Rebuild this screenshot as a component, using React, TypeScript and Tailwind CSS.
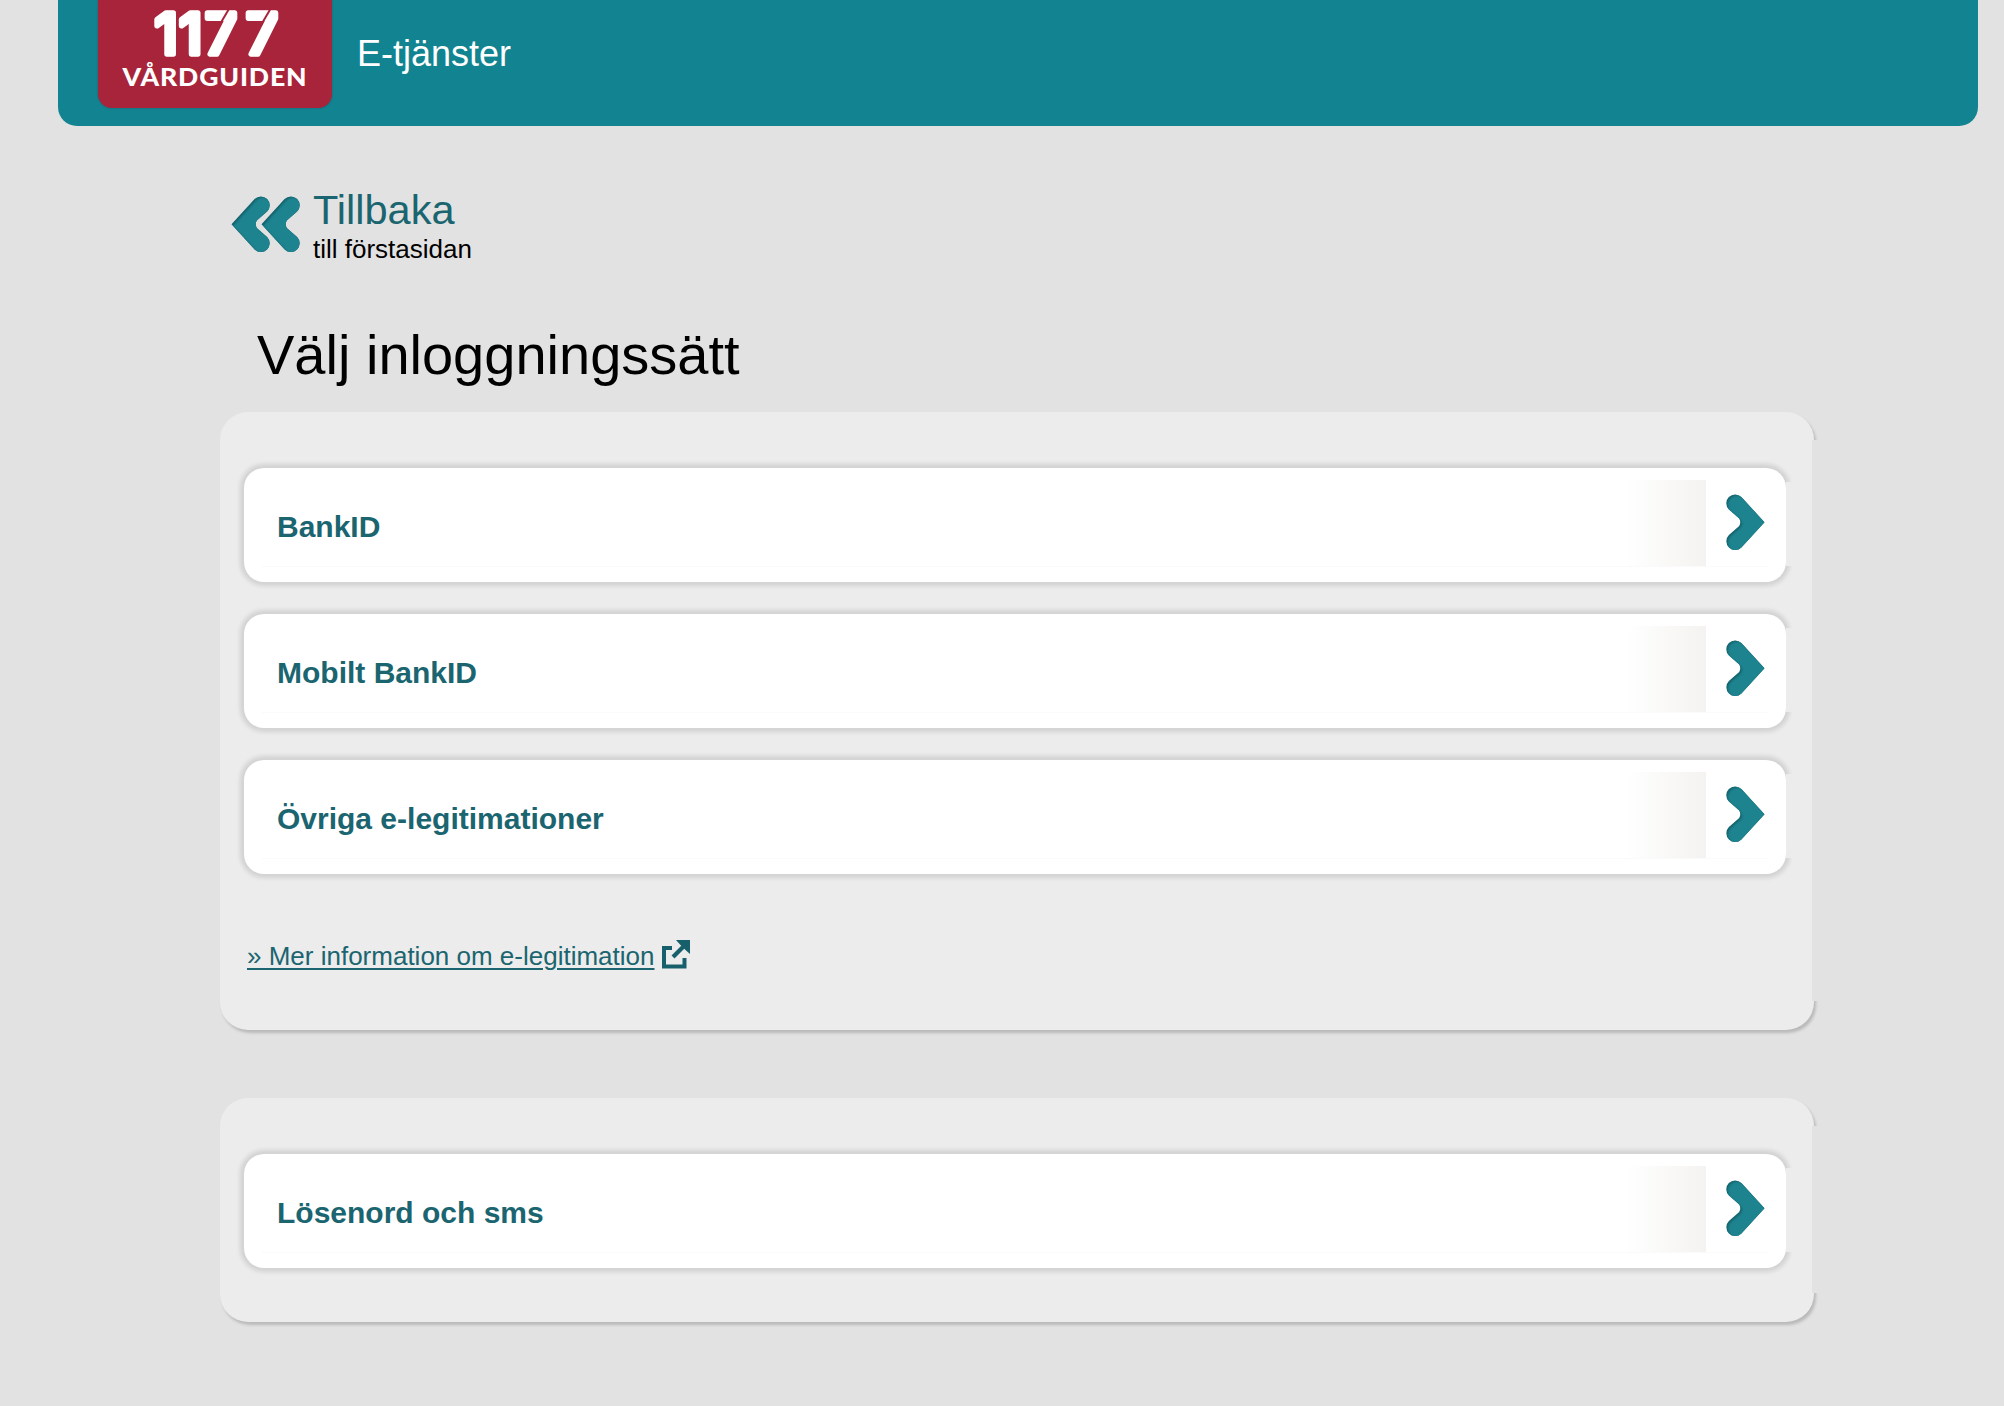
import React, { useId } from "react";

const CHEVRON =
  "M17.4 7 L40.5 32.3 L17.4 57.4 A8.8 8.8 0 0 1 4.9 45 L15.2 36 Q17.4 32.3 15.2 28.6 L4.9 19.6 A8.8 8.8 0 0 1 17.4 7 Z";
const CHEVRON_LEFT =
  "M26.6 7 L3.5 32.3 L26.6 57.4 A8.8 8.8 0 0 0 39.1 45 L28.8 36 Q26.6 32.3 28.8 28.6 L39.1 19.6 A8.8 8.8 0 0 0 26.6 7 Z";

function Chevron({ left = false, className = "" }: { left?: boolean; className?: string }) {
  const id = useId();
  const d = left ? CHEVRON_LEFT : CHEVRON;
  return (
    <svg viewBox="0 0 44 64" className={`h-16 w-11 shrink-0 ${className}`} aria-hidden="true">
      <clipPath id={id}>
        <path d={d} />
      </clipPath>
      <path d={d} fill="#13606a" />
      <g clipPath={`url(#${id})`}>
        <path
          d={d}
          fill="#1d838f"
          stroke="#1d838f"
          strokeWidth="1.5"
          transform="translate(2.2 1.6)"
          className="blur-[1px]"
        />
      </g>
    </svg>
  );
}

function Logo() {
  return (
    <a className="ml-10 block h-[107.5px] w-[234px] rounded-b-[14px] bg-[#a8243a] shadow-[0_0_2px_rgba(60,30,60,0.4)]">
      <svg viewBox="0 0 234 108" className="h-[108px] w-[234px] overflow-visible" role="img" aria-label="1177 Vårdguiden">
        <text
          x="56.5 81 107 148"
          y="54.3"
          fill="#fff"
          stroke="#fff"
          strokeWidth="5.5"
          strokeLinejoin="round"
          fontFamily="Inter, sans-serif"
          fontWeight="500"
          fontSize="56"
        >
          1177
        </text>
        <g stroke="#a8243a" strokeWidth="2">
          <path d="M131.500 8 L121.500 25" />
          <path d="M173 8 L163 25" />
        </g>
        <text
          x="24.500"
          y="85.500"
          fill="#fff"
          fontFamily="Lato, sans-serif"
          fontWeight="900"
          fontSize="25"
          letterSpacing="0.8"
          textLength="185"
          lengthAdjust="spacingAndGlyphs"
        >
          VÅRDGUIDEN
        </text>
      </svg>
    </a>
  );
}

function Choice({ label }: { label: string }) {
  return (
    <a className="relative flex h-[113.500px] items-start rounded-[20px] bg-white shadow-[0_0_4px_4px_rgba(0,0,0,0.11)]">
      <span className="ml-[33px] mt-[41px] text-[30px] font-bold leading-[36px] text-[#1b6570]">{label}</span>
      <span className="ml-auto mt-3 h-[86px] w-20 bg-linear-to-r from-white to-[#f4f3f1]" />
      <Chevron className="ml-[18px] mr-[18px] mt-[22px]" />
      <span className="absolute -right-2 top-[14px] h-[84px] w-2 bg-[#ececec]" />
      <span className="absolute inset-x-[18px] top-[98px] h-px bg-[#fafafa]" />
    </a>
  );
}

function Panel({ className, children }: { className: string; children: React.ReactNode }) {
  return (
    <section
      className={`relative ml-[220px] w-[1594px] rounded-[28px] bg-[#ececec] pl-6 pr-7 pt-14 shadow-[2px_3px_3px_rgba(0,0,0,0.18)] ${className}`}
    >
      <span className="absolute -right-[6px] bottom-[29px] top-7 w-2 bg-[#e2e2e2]" />
      {children}
    </section>
  );
}

function ExternalIcon() {
  return (
    <svg viewBox="0 0 28 29" className="ml-[7px] h-[29px] w-7" aria-hidden="true">
      <path d="M10 8H2V26.500H22.500V18" fill="none" stroke="#17606b" strokeWidth="4" />
      <path d="M11 17L22 6" stroke="#17606b" strokeWidth="4.200" />
      <path d="M14 0H28V14L23.500 10L18 4.500Z" fill="#17606b" />
    </svg>
  );
}

export default function App() {
  return (
    <div className="h-[1406px] w-[2004px] overflow-hidden bg-[#e2e2e2] font-['Liberation_Sans',Arial,sans-serif] text-black">
      <header className="ml-[58px] flex h-[126px] w-[1920px] items-start rounded-b-[19px] bg-[#128390]">
        <Logo />
        <span className="ml-[25px] mt-[33px] text-[36px] leading-[42px] text-white">E-tjänster</span>
      </header>

      <main>
        <a className="ml-[228px] mt-[66px] flex h-[74px]">
          <Chevron left />
          <Chevron left className="-ml-[14px]" />
          <span className="ml-[11px] flex flex-col">
            <span className="-mt-[5px] text-[41.500px] leading-[46px] text-[#1b6570]">Tillbaka</span>
            <span className="mt-[1px] text-[26px] leading-[30px]">till förstasidan</span>
          </span>
        </a>

        <h1 className="ml-[257px] mt-[57px] h-[89px] text-[56px] leading-[63px]">Välj inloggningssätt</h1>

        <Panel className="h-[617.500px]">
          <div className="flex flex-col gap-[32.500px]">
            <Choice label="BankID" />
            <Choice label="Mobilt BankID" />
            <Choice label="Övriga e-legitimationer" />
          </div>
          <a className="ml-[3px] mt-[66px] flex items-start text-[26px] leading-[30px] text-[#1b6570]">
            <span className="mt-[1px] underline decoration-2 underline-offset-[3px]">» Mer information om e-legitimation</span>
            <ExternalIcon />
          </a>
        </Panel>

        <Panel className="mt-[68.500px] h-[224px]">
          <Choice label="Lösenord och sms" />
        </Panel>
      </main>
    </div>
  );
}
